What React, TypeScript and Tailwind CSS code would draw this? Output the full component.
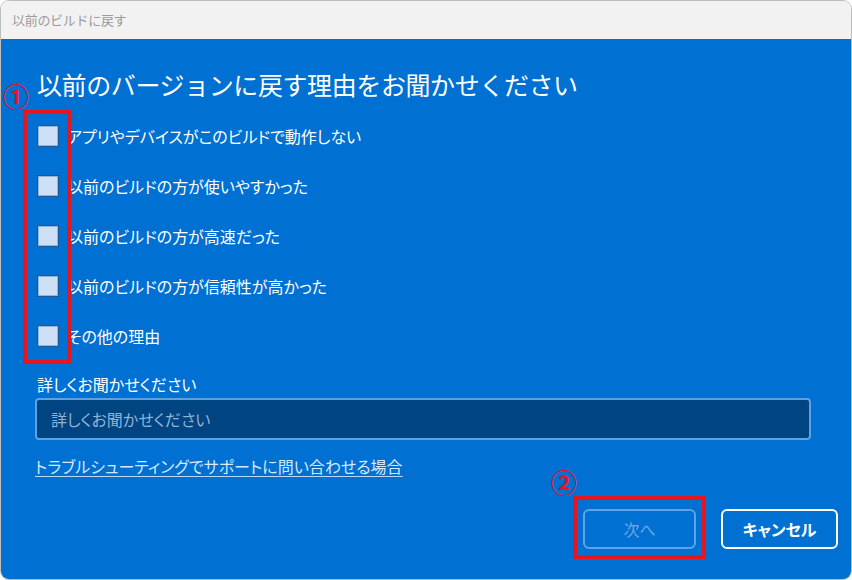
import React from "react";

const reasons = [
  "アプリやデバイスがこのビルドで動作しない",
  "以前のビルドの方が使いやすかった",
  "以前のビルドの方が高速だった",
  "以前のビルドの方が信頼性が高かった",
  "その他の理由",
];

export default function App() {
  return (
    <div
      className="w-[852px] h-[580px] bg-white relative"
      style={{ fontFamily: '"Noto Sans CJK JP", "Noto Sans", sans-serif' }}
    >
      <div className="w-[852px] h-[580px] border border-[#bdbdbd] rounded-[9px] overflow-hidden flex flex-col">
        <div className="h-[38px] bg-[#f2f2f2] flex items-center pl-[11px] text-[13px] text-[#9b9b9b] tracking-[-0.3px]">
          以前のビルドに戻す
        </div>
        <div className="flex-1 bg-[#0070d2] flex flex-col pl-[34px] pr-[13px] text-white">
          <h1 className="mt-[28px] text-[25px] leading-[34px] font-normal tracking-[-0.4px] ml-[2px]">
            以前のバージョンに戻す理由をお聞かせください
          </h1>
          <div className="mt-[10px] flex flex-col">
            {reasons.map((r) => (
              <label key={r} className="h-[50px] flex items-center">
                <span className="ml-[2px] w-[22px] h-[22px] border border-[#1d5894] bg-[#cde0f5] shadow-[inset_0_0_0_1px_#93b4d6] shrink-0" />
                <span className="ml-[8px] text-[16px] leading-[22px] [font-feature-settings:'palt']">{r}</span>
              </label>
            ))}
          </div>
          <div className="mt-[12px] ml-[2px] text-[16px] leading-[22px] [font-feature-settings:'palt']">詳しくお聞かせください</div>
          <div className="mt-[3px] w-[776px] h-[42px] rounded-[4px] border-2 border-[#5da2e3] bg-[#004482] flex items-center pl-[14px] text-[16px] text-[#8fb3d6] [font-feature-settings:'palt']">
            詳しくお聞かせください
          </div>
          <div className="mt-[15px] text-[16px] leading-[22px] [font-feature-settings:'palt']">
            <span className="underline underline-offset-[3px] text-[#d6e8fa] decoration-[#bcd8f4]">
              トラブルシューティングでサポートに問い合わせる場合
            </span>
          </div>
          <div className="mt-[32px] flex justify-end gap-[25px]">
            <button className="w-[113px] h-[40px] rounded-[6px] border-2 border-[#5fa3e6] text-[16px] text-[#6fa9e2]">
              次へ
            </button>
            <button className="w-[117px] h-[40px] rounded-[6px] border-2 border-white text-[16px] font-bold text-white [font-feature-settings:'palt']">
              キャンセル
            </button>
          </div>
        </div>
      </div>

      {/* annotations */}
      <div className="absolute left-[3px] top-[81px] text-[26px] leading-[30px] font-bold text-[#e8141e]">①</div>
      <div className="absolute left-[23px] top-[110px] w-[48px] h-[254px] border-[4px] border-[#e8141e]" />
      <div className="absolute left-[551px] top-[467px] text-[26px] leading-[30px] font-bold text-[#e8141e]">②</div>
      <div className="absolute left-[573px] top-[496px] w-[133px] h-[63px] border-[4px] border-[#e8141e]" />
    </div>
  );
}
